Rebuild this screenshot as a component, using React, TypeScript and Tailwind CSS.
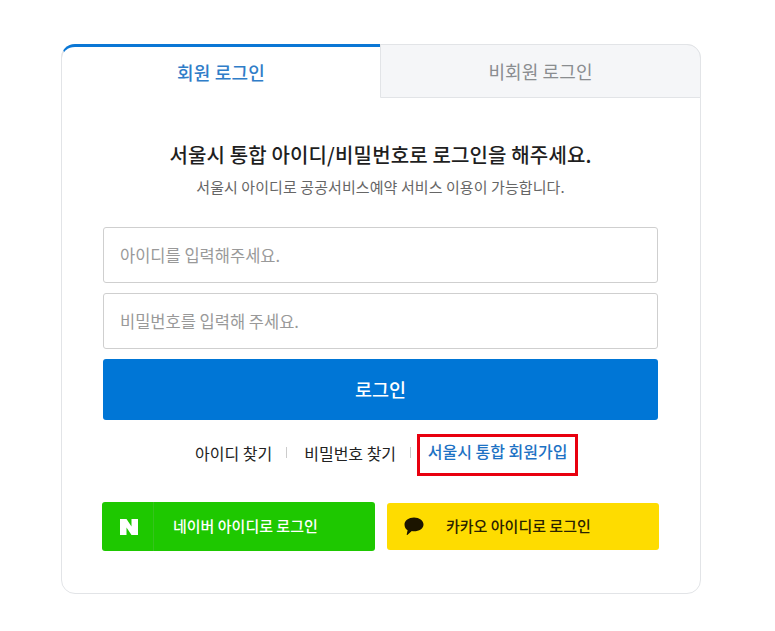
export default function App() {
  return (
    <div className="w-[775px] h-[631px] bg-white pt-[44px] pl-[61px] font-['Noto_Sans_CJK_KR','Noto_Sans',sans-serif]">
      <div className="w-[640px] h-[550px] border border-[#e2e4e7] rounded-[14px] bg-white">
        <div className="flex h-[54px] -mt-px -ml-px -mr-px">
          <div className="w-[319px] h-[54px] border-t-[3px] border-[#0a77d5] border-l border-l-[#e2e4e7] rounded-tl-[14px] flex items-center justify-center text-[18px] font-medium tracking-[0.2px] text-[#2f7dc8]">
            회원 로그인
          </div>
          <div className="flex-1 h-[54px] bg-[#f5f6f8] border border-[#e2e4e7] rounded-tr-[14px] flex items-center justify-center text-[18px] tracking-[0.1px] text-[#8a8d90]">
            비회원 로그인
          </div>
        </div>
        <div className="pt-[43px] pr-px flex flex-col items-center">
          <h1 className="text-[20px] leading-[28px] font-medium tracking-[0.15px] text-[#1f1f1f]">
            서울시 통합 아이디/비밀번호로 로그인을 해주세요.
          </h1>
          <p className="mt-[7px] text-[15px] leading-[22px] tracking-[0.08px] text-[#666666]">
            서울시 아이디로 공공서비스예약 서비스 이용이 가능합니다.
          </p>
        </div>
        <div className="mt-[29px] ml-[41px] w-[555px] flex flex-col gap-[10px]">
          <input
            readOnly
            placeholder="아이디를 입력해주세요."
            className="h-[56px] border border-[#cfcfcf] rounded-[3px] px-[16px] text-[16.5px] placeholder:text-[#999999] outline-none"
          />
          <input
            readOnly
            placeholder="비밀번호를 입력해 주세요."
            className="h-[56px] border border-[#cfcfcf] rounded-[3px] px-[16px] text-[16.5px] placeholder:text-[#999999] outline-none"
          />
          <button className="h-[61px] bg-[#0076d6] rounded-[3px] text-white text-[18.5px] font-medium">
            로그인
          </button>
        </div>
        <div className="mt-[14px] ml-[133px] h-[42px] flex items-center text-[16px] text-[#222222]">
          <span className="mb-[5px]">아이디 찾기</span>
          <span className="ml-[14px] mr-[17px] mb-[5px] w-px h-[11px] bg-[#cccccc]" />
          <span className="mb-[5px]">비밀번호 찾기</span>
          <span className="ml-[14px] mr-[6px] mb-[5px] w-px h-[11px] bg-[#cccccc]" />
          <a className="w-[161px] h-[42px] border-[3px] border-[#e8000f] flex items-center justify-center pb-[8px] font-medium text-[#1d72c4]">
            서울시 통합 회원가입
          </a>
        </div>
        <div className="mt-[26px] ml-[40px] flex items-center gap-[12px]">
          <div className="w-[273px] h-[49px] bg-[#1ec800] rounded-[3px] flex items-center text-white">
            <div className="w-[52px] h-full border-r border-[#35c41c] flex items-center justify-center pl-[2px]">
              <svg width="18" height="16" viewBox="0 0 18 16" fill="#ffffff">
                <path d="M0 0h6.5l5 7.4V0H18v16h-6.5l-5-7.4V16H0z" />
              </svg>
            </div>
            <span className="ml-[19px] text-[15px] font-medium">네이버 아이디로 로그인</span>
          </div>
          <div className="w-[272px] h-[47px] bg-[#fedc00] rounded-[3px] flex items-center text-[#2a2200]">
            <svg className="ml-[17px]" width="20" height="19" viewBox="0 0 20 19" fill="#1c1500">
              <path d="M10 .5c5.2 0 9.5 3 9.5 6.9s-4.300 6.900-9.500 6.900c-.8 0-1.500-.1-2.200-.2L3.300 18c-.4.200-.7 0-.6-.4l.9-4.400C1.700 12 .5 9.900.5 7.400.5 3.500 4.800.500 10 .500z" />
            </svg>
            <span className="ml-[22px] text-[15px] font-medium">카카오 아이디로 로그인</span>
          </div>
        </div>
      </div>
    </div>
  );
}
